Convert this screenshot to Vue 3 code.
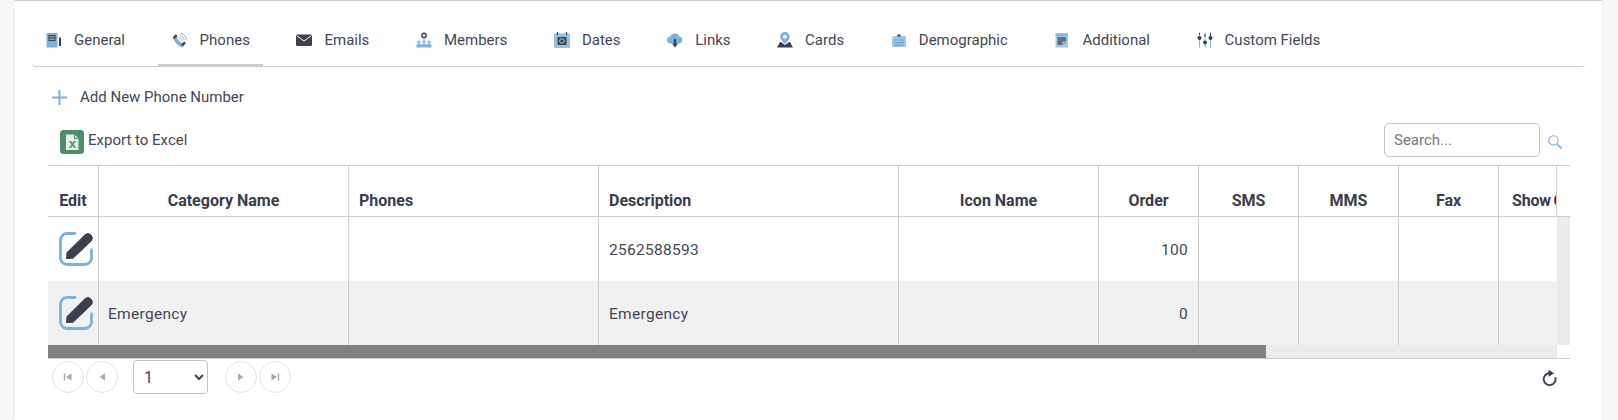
<script setup>
const columns = [
  { label: 'Edit', width: 51 },
  { label: 'Category Name', width: 250 },
  { label: 'Phones', width: 250, left: true },
  { label: 'Description', width: 300, left: true },
  { label: 'Icon Name', width: 200 },
  { label: 'Order', width: 100 },
  { label: 'SMS', width: 100 },
  { label: 'MMS', width: 100 },
  { label: 'Fax', width: 100 },
  { label: 'Show Category', width: 58, left: true, last: true }
]
const rows = [
  { category: '', description: '2562588593', order: 100 },
  { category: 'Emergency', description: 'Emergency', order: 0 }
]
</script>

<template>
  <div class="page">
    <section class="card">
      <nav class="tabs">
        <a class="tab">
          <svg viewBox="0 0 16 16" class="ico"><rect x="0.500" y="1" width="11" height="14.500" rx="1" fill="#7ab2dc"/><rect x="2.500" y="3" width="7" height="6" fill="#3c3f50"/><path d="M3.500 4.500h5M3.500 6h5M3.500 7.500h5" stroke="#a9cdea" stroke-width=".7"/><path d="M14 5.500v8.500" stroke="#3c3f50" stroke-width="2"/></svg>
          <span>General</span>
        </a>
        <a class="tab active">
          <svg viewBox="0 0 16 16" class="ico"><path d="M3 4.500C3.500 9 7 12.500 11.500 13.500" fill="none" stroke="#7ab2dc" stroke-width="4"/><path d="M.8 5.200l3-3 1.700 1.700-3 3zM9.200 12.500l3-3 1.700 1.700-3 3z" fill="#3c3f50"/><path d="M7.500 6c1.500.3 2.300 1.200 2.600 2.600M8 3.800c2.400.4 3.900 1.900 4.300 4.300M8.500 1.500c3.300.5 5.600 2.800 6.100 6.100" fill="none" stroke="#8a8d99" stroke-width=".8"/></svg>
          <span>Phones</span>
        </a>
        <a class="tab">
          <svg viewBox="0 0 16 16" class="ico"><rect y="2.500" width="16" height="11.500" rx="1.200" fill="#3c3f50"/><path d="M.6 3.600L8 9l7.400-5.400" fill="none" stroke="#fff" stroke-width="1"/></svg>
          <span>Emails</span>
        </a>
        <a class="tab">
          <svg viewBox="0 0 16 16" class="ico"><circle cx="8" cy="3.500" r="2.200" fill="none" stroke="#3c3f50" stroke-width="1.400"/><path d="M8 6v2.500" stroke="#7ab2dc"/><circle cx="3" cy="10" r="1.500" fill="#7ab2dc"/><circle cx="8" cy="9.800" r="1.500" fill="#7ab2dc"/><circle cx="13" cy="10" r="1.500" fill="#7ab2dc"/><path d="M.5 15.500v-2.500a2 2 0 0 1 2-1.500h1a2 2 0 0 1 2 1.500v2.500zM5.500 15.500v-2.500a2 2 0 0 1 2-1.500h1a2 2 0 0 1 2 1.500v2.500zM10.500 15.500v-2.500a2 2 0 0 1 2-1.500h1a2 2 0 0 1 2 1.500v2.500z" fill="#7ab2dc"/></svg>
          <span>Members</span>
        </a>
        <a class="tab">
          <svg viewBox="0 0 16 16" class="ico"><rect y="1.500" width="16" height="14.500" rx="1" fill="#92c0e6"/><path d="M3.500 0v3M12.500 0v3" stroke="#3c3f50" stroke-width="1.200"/><rect x="3.500" y="5" width="9" height="8" rx="1" fill="#3c3f50"/><circle cx="8" cy="9" r="2.300" fill="none" stroke="#b9cbdb" stroke-width="1"/></svg>
          <span>Dates</span>
        </a>
        <a class="tab">
          <svg viewBox="0 0 16 16" class="ico"><path d="M3.800 11.500a3.500 3.500 0 0 1-.4-7A4.800 4.800 0 0 1 12.400 4.600a3.500 3.500 0 0 1-.2 6.900z" fill="#7ab2dc"/><path d="M6.900 7h2.200v4.500H11L8 15.500 5 11.500h1.900z" fill="#3c3f50"/></svg>
          <span>Links</span>
        </a>
        <a class="tab">
          <svg viewBox="0 0 16 16" class="ico"><path d="M8 0a4.800 4.800 0 0 0-4.800 4.800C3.200 7.800 8 12 8 12s4.800-4.200 4.800-7.200A4.800 4.800 0 0 0 8 0z" fill="#7ab2dc"/><circle cx="8" cy="4.800" r="2" fill="#fff"/><path d="M0 15.500l3.300-6 4.700 3.500 4.700-3.500 3.300 6z" fill="#3c3f50"/></svg>
          <span>Cards</span>
        </a>
        <a class="tab">
          <svg viewBox="0 0 16 16" class="ico"><rect x="1" y="4" width="14" height="11" rx="1.200" fill="#9cc8ea"/><path d="M6.500 4L8 1.500 9.500 4z" fill="#3c3f50"/><path d="M6 4h4" stroke="#3c3f50" stroke-width="1"/><path d="M3 8h3M3 10.500h10M8 8h5M3 13h10" stroke="#5f97c4" stroke-width=".9"/></svg>
          <span>Demographic</span>
        </a>
        <a class="tab">
          <svg viewBox="0 0 16 16" class="ico"><rect x="1.500" y="1" width="12.500" height="14.500" rx="1" fill="#9cc8ea"/><path d="M1.500 3h12.500" stroke="#5f97c4" stroke-width=".8"/><path d="M3.500 5h8.500v5l-3 3H3.500z" fill="#686b7b"/><path d="M9 13v-3h3" fill="none" stroke="#d5dfe8" stroke-width=".8"/></svg>
          <span>Additional</span>
        </a>
        <a class="tab">
          <svg viewBox="0 0 16 16" class="ico"><path d="M2.500 .5v15M8 .5v15M13.500 .5v15" stroke="#7ab2dc" stroke-width="1"/><path d="M2.500 1v2M8 2v3M13.500 1v3" stroke="#3c3f50" stroke-width="1"/><circle cx="2.500" cy="6" r="2" fill="#3c3f50"/><circle cx="8" cy="10.500" r="2" fill="#3c3f50"/><circle cx="13.500" cy="6" r="2" fill="#3c3f50"/></svg>
          <span>Custom Fields</span>
        </a>
      </nav>

      <div class="add-row">
        <svg viewBox="0 0 15 15" class="plus"><path d="M7.500 0v15M0 7.500h15" stroke="#7ab2dc" stroke-width="2"/></svg>
        <span>Add New Phone Number</span>
      </div>

      <div class="grid-box">
        <div class="toolbar">
          <div class="export">
            <svg viewBox="0 0 24 24" class="excel">
              <rect width="24" height="24" rx="3.500" fill="#4a8f68"/>
              <path d="M6 4.500h8.500l4 4v11.500H6z" fill="#e4f0e9"/>
              <path d="M14.500 4.500v4h4" fill="none" stroke="#4a8f68" stroke-width="1"/>
              <text x="12.300" y="17.700" text-anchor="middle" class="excel-x">x</text>
            </svg>
            <span>Export to Excel</span>
          </div>
          <div class="search">
            <input class="search-input" type="text" placeholder="Search..." />
            <svg viewBox="0 0 15 15" class="search-ico"><circle cx="5.800" cy="5.800" r="5" fill="none" stroke="#7ab2dc" stroke-width="1.200"/><path d="M9.500 9.500L14.500 14.500" stroke="#7ab2dc" stroke-width="1.800"/></svg>
          </div>
        </div>

        <div class="grid">
          <div class="grid-main">
            <table class="table">
              <colgroup>
                <col v-for="c in columns" :key="c.label" :style="{ width: c.width + 'px' }" />
              </colgroup>
              <thead>
                <tr>
                  <th v-for="c in columns" :key="c.label" :class="{ left: c.left, clip: c.last, tight: c.label === 'Edit' }">{{ c.label }}</th>
                </tr>
              </thead>
              <tbody>
                <tr v-for="(r, i) in rows" :key="i" :class="{ alt: i === 1 }">
                  <td class="edit-cell">
                    <svg viewBox="0 0 34 34" class="edit">
                      <path d="M16 1.500H8A6.500 6.500 0 0 0 1.500 8v18A6.500 6.500 0 0 0 8 32.500h18a6.500 6.500 0 0 0 6.500-6.500v-8" fill="none" stroke="#7ab2dc" stroke-width="2.800" stroke-linecap="round"/>
                      <path d="M7.500 26.500L8 20.500 26 2.800a4.400 4.400 0 0 1 6.200 6.200L14 26.300z" fill="#3c3f50" stroke="#3c3f50" stroke-width="1" stroke-linejoin="round"/>
                    </svg>
                  </td>
                  <td class="cat">{{ r.category }}</td>
                  <td></td>
                  <td>{{ r.description }}</td>
                  <td></td>
                  <td class="num">{{ r.order }}</td>
                  <td></td>
                  <td></td>
                  <td></td>
                  <td class="no-border"></td>
                </tr>
              </tbody>
            </table>
            <div class="hbar"><div class="hthumb"></div></div>
          </div>
          <div class="gutter">
            <div class="gutter-head"></div>
            <div class="gutter-track"></div>
          </div>
        </div>

        <div class="pager">
          <div class="pager-left">
            <button class="round"><svg viewBox="0 0 10 10" class="pg"><path d="M1.500 1.500v7" stroke="#aaa" stroke-width="1.400"/><path d="M8.500 1.500v7L3 5z" fill="#aaa"/></svg></button>
            <button class="round"><svg viewBox="0 0 10 10" class="pg"><path d="M8 1.500v7L2.500 5z" fill="#aaa"/></svg></button>
            <select class="page-select"><option>1</option></select>
            <button class="round"><svg viewBox="0 0 10 10" class="pg"><path d="M2 1.500v7L7.500 5z" fill="#aaa"/></svg></button>
            <button class="round"><svg viewBox="0 0 10 10" class="pg"><path d="M1.500 1.500v7L7 5z" fill="#aaa"/><path d="M8.500 1.500v7" stroke="#aaa" stroke-width="1.400"/></svg></button>
          </div>
          <svg viewBox="0 0 16 18" class="refresh"><path d="M8 4.500A6.300 6.300 0 1 0 14.100 8.800" fill="none" stroke="#3c3f50" stroke-width="2"/><path d="M7 .8l6 3.700-6 3.700z" fill="#3c3f50"/></svg>
        </div>
      </div>
    </section>
  </div>
</template>

<style>
html, body { margin: 0; background: #fff; }
</style>

<style scoped>
.page {
  width: 1618px;
  height: 420px;
  box-sizing: border-box;
  padding-left: 15px;
  overflow: hidden;
  background: linear-gradient(90deg, #f7f7f7 0, #f7f7f7 15px, #fff 15px, #fff 1602px, #f7f7f7 1602px);
  font-family: Roboto, "Liberation Sans", sans-serif;
  color: #434656;
}
.card {
  width: 1587px;
  height: 420px;
  box-sizing: border-box;
  padding: 14px 17px 0 17px;
  background: #fff;
  border-top: 1px solid #ccc;
  box-shadow: 0 0 2px rgba(0, 0, 0, .08);
}
.tabs {
  display: flex;
  gap: 19.600px;
  height: 51px;
  border-bottom: 1px solid #ccc;
  border-radius: 0 0 4px 4px;
}
.tab {
  display: flex;
  align-items: center;
  height: 51px;
  box-sizing: border-box;
  padding: 0 13px 1px 14px;
  font-size: 15px;
  white-space: nowrap;
  margin-bottom: -1px;
}
.tab.active { border-bottom: 2px solid #ccc; padding-bottom: 0; }
.ico { width: 16px; height: 16px; margin-right: 12px; flex: none; }
.add-row {
  display: flex;
  align-items: center;
  height: 30px;
  margin-top: 15px;
  padding-left: 20px;
  font-size: 15px;
}
.plus { width: 15px; height: 15px; margin-right: 13px; }
.grid-box { margin-left: 16px; width: 1522px; }
.toolbar {
  display: flex;
  justify-content: space-between;
  align-items: center;
  height: 34px;
  margin-top: 11px;
  margin-bottom: 8px;
}
.export { display: flex; align-items: center; padding-left: 12px; font-size: 15px; }
.excel { width: 24px; height: 24px; margin: 4px 4px 0 0; }
.excel-x { font: 700 13px "Liberation Sans", sans-serif; fill: #4a8f68; }
.search { display: flex; align-items: center; padding-right: 8px; }
.search-input {
  width: 156px;
  height: 34px;
  box-sizing: border-box;
  padding: 0 9px;
  border: 1px solid #c4c4c4;
  border-radius: 5px;
  outline: none;
  font: 15px Roboto, sans-serif;
  color: #3f4252;
}
.search-input::placeholder { color: #77797f; opacity: 1; }
.search-ico { width: 14px; height: 14px; margin: 4px 0 0 8px; }
.grid { display: flex; border-top: 1px solid #ccc; }
.grid-main { width: 1509px; overflow: hidden; }
.table {
  table-layout: fixed;
  width: 1509px;
  border-collapse: separate;
  border-spacing: 0;
}
th {
  height: 51px;
  box-sizing: border-box;
  padding: 19px 10px 0;
  font-size: 16px;
  font-weight: 700;
  text-align: center;
  white-space: nowrap;
  overflow: hidden;
  border-right: 1px solid #ccc;
  border-bottom: 1px solid #ccc;
  color: #3a3d4d;
}
th.left { text-align: left; }
th.tight { padding-left: 0; padding-right: 0; }
th.clip { padding-left: 13px; padding-right: 0; letter-spacing: -.2px; word-spacing: -1px; }
td {
  height: 64px;
  box-sizing: border-box;
  padding: 2px 10px 0;
  font-size: 15.500px;
  letter-spacing: .3px;
  border-right: 1px solid #ccc;
  white-space: nowrap;
}
td.cat { padding-left: 9px; }
td.no-border { border-right: 0; }
td.num { text-align: right; }
td.edit-cell { padding: 0 0 0 11px; line-height: 0; }
tr.alt td { background: #f1f1f1; }
.edit { width: 34px; height: 34px; }
.hbar { height: 13px; background: #ebebeb; }
.hthumb { width: 1218px; height: 13px; background: #808080; }
.gutter { display: flex; flex-direction: column; width: 13px; }
.gutter-head { height: 51px; box-sizing: border-box; border-bottom: 1px solid #ccc; flex: none; }
.gutter-track { height: 128px; background: #ebebeb; }
.pager {
  display: flex;
  justify-content: space-between;
  align-items: center;
  height: 36px;
  border-top: 1px solid #ccc;
}
.pager-left { display: flex; align-items: center; padding-left: 4px; }
.round {
  width: 32px;
  height: 32px;
  margin-right: 2px;
  padding: 0;
  border: 1px solid #e2e2e2;
  border-radius: 50%;
  background: #fff;
  display: flex;
  align-items: center;
  justify-content: center;
}
.pg { width: 10px; height: 10px; }
.page-select {
  width: 75px;
  height: 34px;
  margin: 0 17px 0 13px;
  padding-left: 6px;
  border: 1px solid #c4c4c4;
  border-radius: 4px;
  background: #fff;
  font: 16px Roboto, sans-serif;
  color: #3f4252;
}
.refresh { width: 15px; height: 17px; margin-right: 13px; }
</style>
